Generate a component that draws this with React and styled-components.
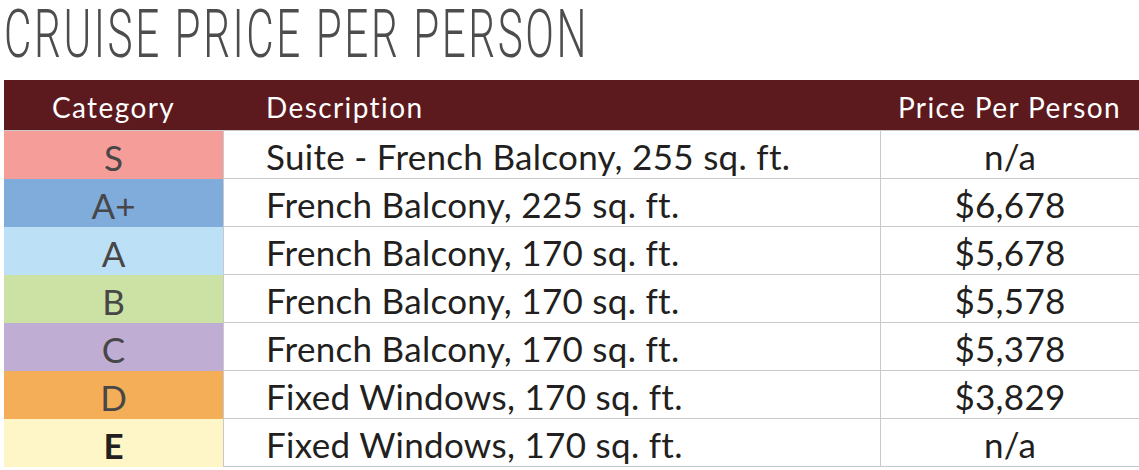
import React from 'react';
import styled, { createGlobalStyle } from 'styled-components';

const GlobalStyle = createGlobalStyle`
  html, body {
    margin: 0;
    padding: 0;
    background: #ffffff;
  }
  body {
    font-family: Lato, "Noto Sans", sans-serif;
  }
`;

const Page = styled.div`
  width: 1139px;
  height: 470px;
  overflow: hidden;
  padding-left: 4px;
  box-sizing: border-box;
`;

const TitleBar = styled.div`
  height: 80px;
`;

const Title = styled.h1`
  display: inline-block;
  margin: 0;
  font-family: Roboto, "Liberation Sans", sans-serif;
  font-weight: 300;
  font-size: 66px;
  line-height: 70px;
  color: #4d4d4d;
  letter-spacing: 4px;
  white-space: nowrap;
  transform: scaleX(0.64);
  transform-origin: left top;
`;

const Table = styled.div`
  display: grid;
  grid-template-columns: 219px 657px 1fr;
`;

const HeadCell = styled.div`
  height: 51px;
  background: #5c1a1e;
  color: #ffffff;
  font-size: 28px;
  letter-spacing: 1.4px;
  display: flex;
  align-items: center;
  justify-content: ${p => (p.$align === 'left' ? 'flex-start' : 'center')};
  padding-left: ${p => (p.$align === 'left' ? '43px' : '0')};
  padding-top: 4px;
  box-sizing: border-box;
  border-bottom: 1px solid #c9c9c9;
  white-space: nowrap;
`;

const CatCell = styled.div`
  height: 48px;
  background: ${p => p.$bg};
  color: ${p => (p.$dark ? '#231f20' : '#474747')};
  font-weight: ${p => (p.$dark ? 700 : 400)};
  font-size: 35px;
  display: flex;
  align-items: center;
  justify-content: center;
  padding-top: 3px;
  box-sizing: border-box;
`;

const Cell = styled.div`
  height: 48px;
  color: #231f20;
  font-size: 35px;
  letter-spacing: 0.3px;
  display: flex;
  align-items: center;
  justify-content: ${p => (p.$center ? 'center' : 'flex-start')};
  padding-left: ${p => (p.$center ? '0' : '42px')};
  padding-top: 3px;
  box-sizing: border-box;
  border-left: 1px solid #c9c9c9;
  border-bottom: 1px solid #c9c9c9;
  white-space: nowrap;
`;

const rows = [
  { cat: 'S', bg: '#f59d98', desc: 'Suite - French Balcony, 255 sq. ft.', price: 'n/a' },
  { cat: 'A+', bg: '#80acdc', desc: 'French Balcony, 225 sq. ft.', price: '$6,678' },
  { cat: 'A', bg: '#bce0f5', desc: 'French Balcony, 170 sq. ft.', price: '$5,678' },
  { cat: 'B', bg: '#cbe2a4', desc: 'French Balcony, 170 sq. ft.', price: '$5,578' },
  { cat: 'C', bg: '#c0add4', desc: 'French Balcony, 170 sq. ft.', price: '$5,378' },
  { cat: 'D', bg: '#f4ae58', desc: 'Fixed Windows, 170 sq. ft.', price: '$3,829' },
  { cat: 'E', bg: '#fef6c6', desc: 'Fixed Windows, 170 sq. ft.', price: 'n/a', dark: true },
];

export default function App() {
  return (
    <>
      <GlobalStyle />
      <Page>
        <TitleBar>
          <Title>CRUISE PRICE PER PERSON</Title>
        </TitleBar>
        <Table>
          <HeadCell>Category</HeadCell>
          <HeadCell $align="left">Description</HeadCell>
          <HeadCell>Price Per Person</HeadCell>
          {rows.map(r => (
            <React.Fragment key={r.cat}>
              <CatCell $bg={r.bg} $dark={r.dark}>{r.cat}</CatCell>
              <Cell>{r.desc}</Cell>
              <Cell $center>{r.price}</Cell>
            </React.Fragment>
          ))}
        </Table>
      </Page>
    </>
  );
}
